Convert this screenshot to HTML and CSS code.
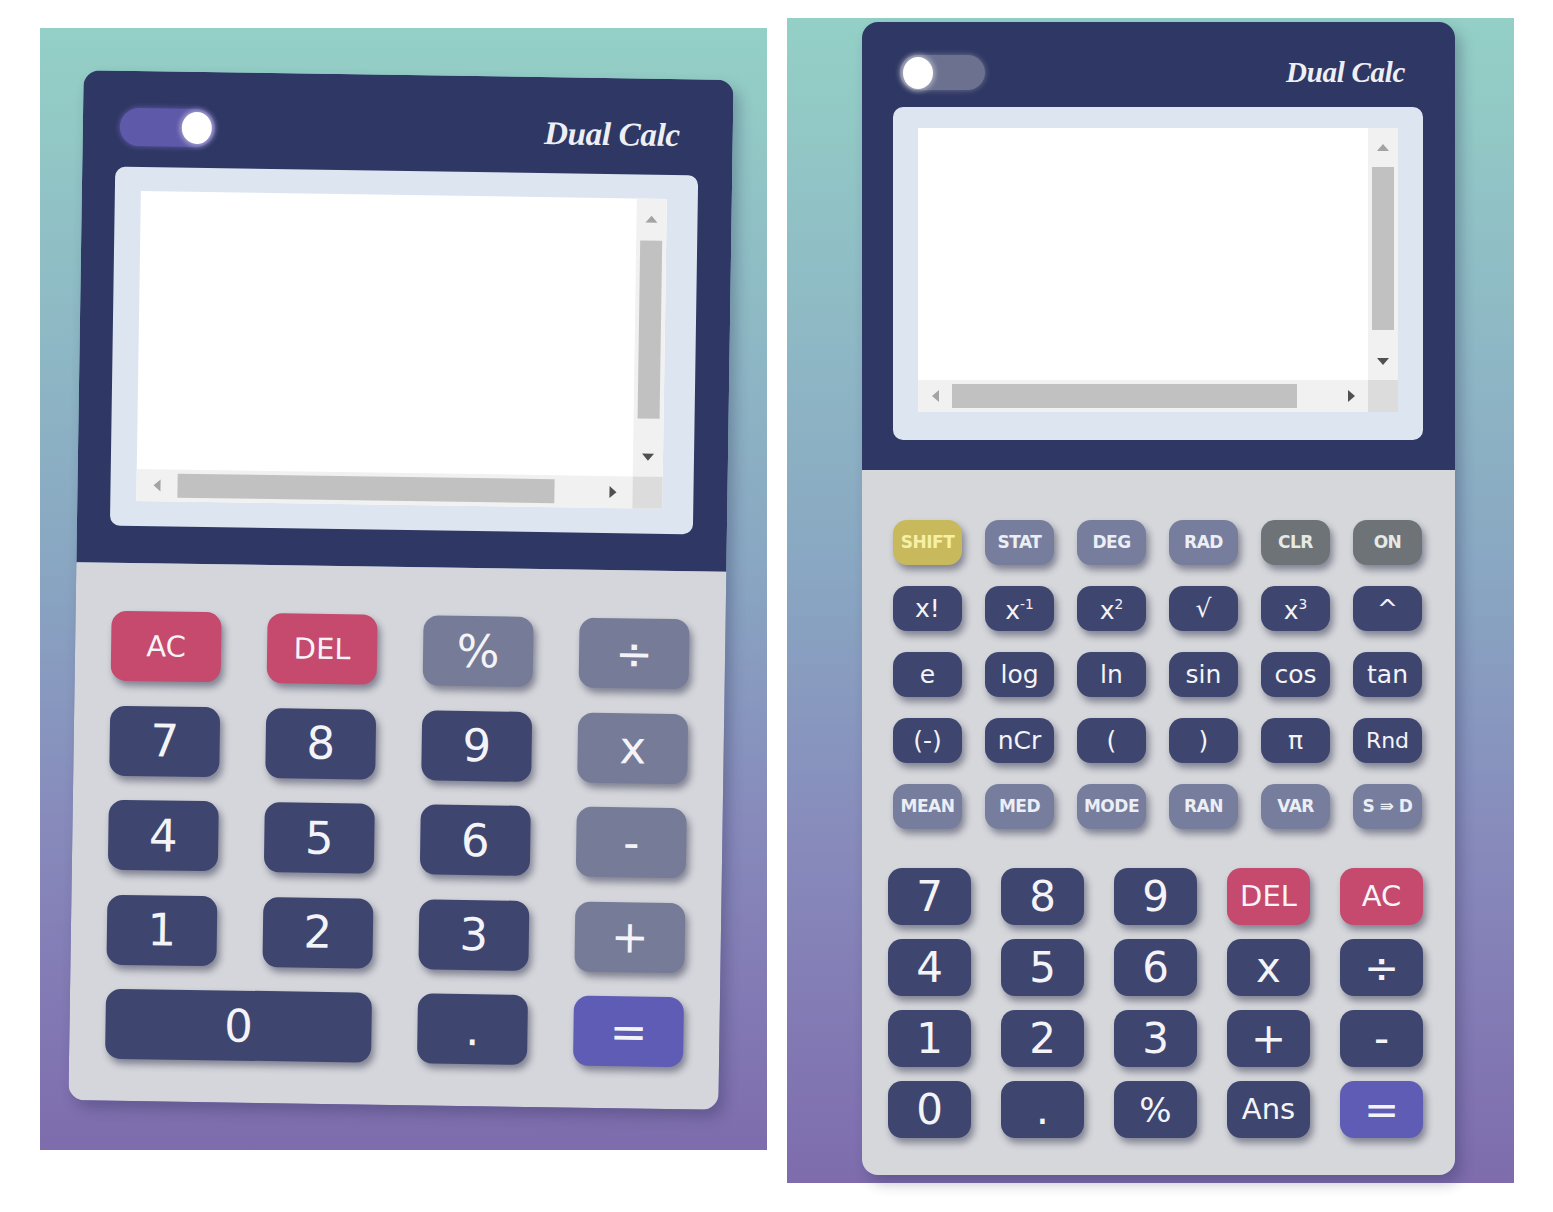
FILE: index.html
```html
<!DOCTYPE html>
<html lang="en">
<head>
<meta charset="utf-8">
<title>Dual Calc</title>
<link rel="stylesheet" href="styles.css">
</head>
<body>
<main class="page">
  <section class="panel panel-basic">
    <div class="calc calc-basic">
      <header class="head">
        <div class="head-top">
          <div class="toggle toggle-on"><span class="knob"></span></div>
          <div class="title">Dual Calc</div>
        </div>
        <div class="screen">
          <div class="display">
            <div class="display-text"></div>
            <div class="vbar">
              <span class="arr-box"><span class="arr arr-up"></span></span>
              <div class="vtrack"><span class="vthumb"></span></div>
              <span class="arr-box"><span class="arr arr-down"></span></span>
            </div>
            <div class="hbar">
              <span class="arr-box"><span class="arr arr-left"></span></span>
              <div class="htrack"><span class="hthumb"></span></div>
              <span class="arr-box"><span class="arr arr-right"></span></span>
            </div>
            <div class="corner"></div>
          </div>
        </div>
      </header>
      <div class="keys-basic">
        <div class="key k-del k-word">AC</div>
        <div class="key k-del k-word">DEL</div>
        <div class="key k-op">%</div>
        <div class="key k-op">÷</div>
        <div class="key k-num">7</div>
        <div class="key k-num">8</div>
        <div class="key k-num">9</div>
        <div class="key k-op">x</div>
        <div class="key k-num">4</div>
        <div class="key k-num">5</div>
        <div class="key k-num">6</div>
        <div class="key k-op">-</div>
        <div class="key k-num">1</div>
        <div class="key k-num">2</div>
        <div class="key k-num">3</div>
        <div class="key k-op">+</div>
        <div class="key k-num k-wide">0</div>
        <div class="key k-num">.</div>
        <div class="key k-eq">=</div>
      </div>
    </div>
  </section>

  <section class="panel panel-sci">
    <div class="calc calc-sci">
      <header class="head">
        <div class="head-top">
          <div class="toggle toggle-off"><span class="knob"></span></div>
          <div class="title">Dual Calc</div>
        </div>
        <div class="screen">
          <div class="display">
            <div class="display-text"></div>
            <div class="vbar">
              <span class="arr-box"><span class="arr arr-up"></span></span>
              <div class="vtrack"><span class="vthumb"></span></div>
              <span class="arr-box"><span class="arr arr-down"></span></span>
            </div>
            <div class="hbar">
              <span class="arr-box"><span class="arr arr-left"></span></span>
              <div class="htrack"><span class="hthumb"></span></div>
              <span class="arr-box"><span class="arr arr-right"></span></span>
            </div>
            <div class="corner"></div>
          </div>
        </div>
      </header>
      <div class="keys-sci">
        <div class="sci-grid">
          <div class="key k-shift k-small">SHIFT</div>
          <div class="key k-stat k-small">STAT</div>
          <div class="key k-stat k-small">DEG</div>
          <div class="key k-stat k-small">RAD</div>
          <div class="key k-clr k-small">CLR</div>
          <div class="key k-clr k-small">ON</div>

          <div class="key k-num">x!</div>
          <div class="key k-num"><span class="pow">x<sup>-1</sup></span></div>
          <div class="key k-num"><span class="pow">x<sup>2</sup></span></div>
          <div class="key k-num">√</div>
          <div class="key k-num"><span class="pow">x<sup>3</sup></span></div>
          <div class="key k-num">^</div>

          <div class="key k-num">e</div>
          <div class="key k-num">log</div>
          <div class="key k-num">ln</div>
          <div class="key k-num">sin</div>
          <div class="key k-num">cos</div>
          <div class="key k-num">tan</div>

          <div class="key k-num">(-)</div>
          <div class="key k-num">nCr</div>
          <div class="key k-num">(</div>
          <div class="key k-num">)</div>
          <div class="key k-num">π</div>
          <div class="key k-num k-rnd">Rnd</div>

          <div class="key k-stat k-small">MEAN</div>
          <div class="key k-stat k-small">MED</div>
          <div class="key k-stat k-small">MODE</div>
          <div class="key k-stat k-small">RAN</div>
          <div class="key k-stat k-small">VAR</div>
          <div class="key k-stat k-small">S ⇛ D</div>
        </div>
        <div class="main-grid">
          <div class="key k-num">7</div>
          <div class="key k-num">8</div>
          <div class="key k-num">9</div>
          <div class="key k-del k-word">DEL</div>
          <div class="key k-del k-word">AC</div>

          <div class="key k-num">4</div>
          <div class="key k-num">5</div>
          <div class="key k-num">6</div>
          <div class="key k-num">x</div>
          <div class="key k-num">÷</div>

          <div class="key k-num">1</div>
          <div class="key k-num">2</div>
          <div class="key k-num">3</div>
          <div class="key k-num">+</div>
          <div class="key k-num">-</div>

          <div class="key k-num">0</div>
          <div class="key k-num">.</div>
          <div class="key k-num k-pct">%</div>
          <div class="key k-num k-word">Ans</div>
          <div class="key k-eq">=</div>
        </div>
      </div>
    </div>
  </section>
</main>
</body>
</html>
```

FILE: styles.css
```css
* { box-sizing: border-box; }

html, body {
  margin: 0;
  background: #ffffff;
}

body {
  font-family: "DejaVu Sans", Verdana, sans-serif;
}

.page {
  display: flex;
  align-items: flex-start;
  gap: 20px;
  padding-left: 40px;
  width: 1553px;
  height: 1212px;
  overflow: hidden;
}

.panel {
  width: 727px;
  background: linear-gradient(180deg, #94d0c6 0%, #8fbdc5 22%, #89a6c2 48%, #8789bb 72%, #7e6cad 100%);
}

.panel-basic {
  margin-top: 28px;
  height: 1122px;
  padding: 47px 0 0 36px;
}

.panel-sci {
  margin-top: 18px;
  height: 1165px;
  padding: 4px 0 0 75px;
}

.calc {
  display: flex;
  flex-direction: column;
  border-radius: 16px;
  overflow: hidden;
  box-shadow: 6px 8px 14px rgba(40, 40, 80, 0.3);
}

.calc-basic {
  width: 650px;
  height: 1030px;
  transform: rotate(0.85deg);
}

.calc-sci {
  width: 593px;
  height: 1153px;
}

/* ---------- header ---------- */
.head {
  background: #2f3864;
  display: flex;
  flex-direction: column;
  flex: none;
}

.calc-basic .head {
  height: 492px;
  padding: 37px 34px 37px 33px;
}

.calc-sci .head {
  height: 448px;
  padding: 33px 32px 30px 31px;
}

.head-top {
  display: flex;
  align-items: center;
  justify-content: space-between;
  flex: none;
}

.calc-basic .head-top {
  height: 38px;
  padding: 0 19px 0 4px;
  margin-bottom: 21px;
}

.calc-sci .head-top {
  height: 35px;
  padding: 0 18px 0 7px;
  margin-bottom: 17px;
}

.title {
  font-family: "Liberation Serif", "Times New Roman", serif;
  font-style: italic;
  font-weight: bold;
  color: #eeeff5;
  letter-spacing: -0.3px;
}

.calc-basic .title { font-size: 33px; }
.calc-sci .title { font-size: 29px; }

.toggle {
  display: flex;
  align-items: center;
  border-radius: 20px;
  padding: 0 3px;
}

.calc-basic .toggle {
  width: 95px;
  height: 38px;
}

.calc-sci .toggle {
  width: 85px;
  height: 35px;
}

.toggle-on {
  background: #5e59a9;
  justify-content: flex-end;
  box-shadow: 0 0 5px 1px rgba(95, 90, 170, 0.8);
}

.toggle-off {
  background: #6c7190;
  justify-content: flex-start;
  box-shadow: 0 0 5px 1px rgba(108, 113, 144, 0.8);
}

.knob {
  display: block;
  width: 30px;
  height: 32px;
  border-radius: 50%;
  background: #ffffff;
  box-shadow: 0 0 5px 2px rgba(255, 255, 255, 0.45);
}

/* ---------- screen ---------- */
.screen {
  flex: 1;
  background: #dde6f0;
  border-radius: 10px;
  display: flex;
}

.calc-basic .screen { padding: 24px 31px 25px 26px; }
.calc-sci .screen { padding: 21px 25px 28px 25px; }

.display {
  flex: 1;
  display: grid;
  grid-template-columns: 1fr 30px;
  grid-template-rows: 1fr 32px;
  background: #ffffff;
}

.vbar {
  background: #f1f1f1;
  display: flex;
  flex-direction: column;
}

.hbar {
  background: #f1f1f1;
  display: flex;
}

.corner { background: #dcdcdc; }

.arr-box {
  display: flex;
  align-items: center;
  justify-content: center;
  flex: none;
}

.calc-basic .vbar .arr-box { height: 40px; }
.calc-basic .hbar .arr-box { width: 40px; }
.calc-sci .vbar .arr-box { height: 38px; }
.calc-sci .hbar .arr-box { width: 34px; }

.arr {
  width: 0;
  height: 0;
  display: block;
}

.arr-up {
  border-left: 6px solid transparent;
  border-right: 6px solid transparent;
  border-bottom: 7px solid #a3a3a3;
}

.arr-down {
  border-left: 6px solid transparent;
  border-right: 6px solid transparent;
  border-top: 7px solid #505050;
}

.arr-left {
  border-top: 6px solid transparent;
  border-bottom: 6px solid transparent;
  border-right: 7px solid #a3a3a3;
}

.arr-right {
  border-top: 6px solid transparent;
  border-bottom: 6px solid transparent;
  border-left: 7px solid #505050;
}

.vtrack {
  flex: 1;
  display: flex;
  flex-direction: column;
  align-items: center;
}

.htrack {
  flex: 1;
  display: flex;
  align-items: center;
}

.vthumb {
  display: block;
  width: 22px;
  background: #c1c1c1;
}

.hthumb {
  display: block;
  height: 24px;
  background: #c1c1c1;
}

.calc-basic .vthumb { margin-top: 2px; height: 178px; }
.calc-basic .hthumb { margin-left: 1px; width: 377px; }
.calc-sci .vthumb { margin-top: 1px; height: 163px; }
.calc-sci .hthumb { margin-left: 0; width: 345px; }

/* ---------- keys ---------- */
.key {
  display: flex;
  align-items: center;
  justify-content: center;
  color: #f4f4f8;
  white-space: nowrap;
  line-height: 1;
  box-shadow: 3px 5px 7px rgba(30, 30, 60, 0.45);
}

.k-num { background: #3e4670; }
.k-op { background: #767b98; }
.k-del { background: #c54a6e; }
.k-eq { background: #5e5cb4; }
.k-shift { background: #c8ba5c; color: #f6efa6; }
.k-stat { background: #777d9d; color: #eceef5; }
.k-clr { background: #6d7376; color: #e6e9e4; }

.keys-basic {
  flex: 1;
  background: #d4d6db;
  padding: 48px 36px 0;
  display: grid;
  grid-template-columns: repeat(4, 110px);
  grid-auto-rows: 70px;
  gap: 24.5px 46px;
  align-content: start;
}

.keys-basic .key {
  border-radius: 15px;
  font-size: 45px;
}

.keys-basic .k-word { font-size: 29px; }
.keys-basic .k-wide { grid-column: span 2; }

.keys-sci {
  flex: 1;
  background: #d5d7db;
  padding: 50px 32px 0 26px;
  display: flex;
  flex-direction: column;
  gap: 39px;
}

.sci-grid {
  margin-left: 5px;
  display: grid;
  grid-template-columns: repeat(6, 69px);
  grid-auto-rows: 45px;
  gap: 21px 23px;
}

.sci-grid .key {
  border-radius: 14px;
  font-size: 25px;
}

.sci-grid .k-small {
  font-size: 17px;
  font-weight: bold;
  letter-spacing: -0.5px;
}

.sci-grid .k-rnd { font-size: 22px; }

.pow {
  display: inline-block;
  padding-top: 4px;
}

.pow sup {
  font-size: 0.55em;
  vertical-align: 0.7em;
  line-height: 0;
}

.main-grid {
  display: grid;
  grid-template-columns: repeat(5, 83px);
  grid-auto-rows: 57px;
  gap: 14px 30px;
}

.main-grid .key {
  border-radius: 14px;
  font-size: 42px;
}

.main-grid .k-word { font-size: 29px; }
.main-grid .k-pct { font-size: 34px; }
```
